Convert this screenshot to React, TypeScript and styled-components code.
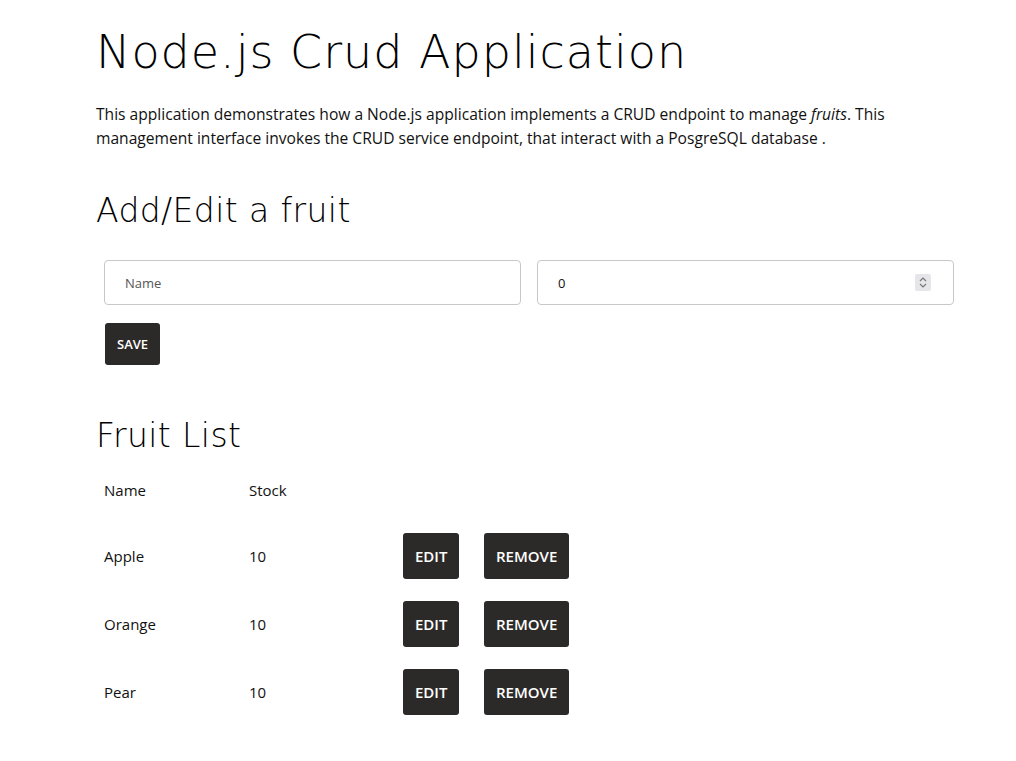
import React from "react";
import styled, { createGlobalStyle } from "styled-components";

const Global = createGlobalStyle`
  html, body { margin: 0; padding: 0; background: #fff; }
  body { font-family: "Open Sans", "Liberation Sans", sans-serif; color: #111; }
  input::-webkit-outer-spin-button, input::-webkit-inner-spin-button { -webkit-appearance: none; margin: 0; }
`;

const Page = styled.div`
  width: 866px;
  margin: 0 0 0 96px;
  padding: 0 0 40px 0;
  box-sizing: border-box;
`;

const Title = styled.h1`
  font-family: "DejaVu Sans", "Lato", sans-serif;
  font-weight: 200;
  font-size: 46px;
  line-height: 60px;
  letter-spacing: 1px;
  margin: 22px 0 0 0;
  color: #000;
`;

const Intro = styled.p`
  font-size: 15.6px;
  line-height: 24px;
  margin: 20px 0 0 0;
  max-width: 850px;
  color: #111;
`;

const Heading = styled.h2<{ $top: number }>`
  font-family: "DejaVu Sans", "Lato", sans-serif;
  font-weight: 200;
  font-size: 33px;
  line-height: 44px;
  letter-spacing: 0.4px;
  margin: ${(p) => p.$top}px 0 0 0;
  color: #000;
`;

const FormGrid = styled.div`
  display: grid;
  grid-template-columns: 1fr 1fr;
  margin-top: 27px;
`;

const Field = styled.div`
  padding: 0 8px;
  position: relative;
`;

const TextInput = styled.input`
  width: 100%;
  box-sizing: border-box;
  height: 45px;
  border: 1px solid #c8c8c8;
  border-radius: 4px;
  padding: 0 20px;
  font-family: "Open Sans", sans-serif;
  font-size: 13px;
  color: #111;
  outline: none;
  &::placeholder { color: #555; }
`;

const Spinner = styled.div`
  position: absolute;
  right: 31px;
  top: 14px;
  width: 16px;
  height: 17px;
  background: #e6e6ea;
  border-radius: 2px;
  display: flex;
  align-items: center;
  justify-content: center;
`;

const FormActions = styled.div`
  padding: 18px 8px 0 9px;
`;

const DarkButton = styled.button<{ $small?: boolean }>`
  background: #2c2a29;
  color: #fff;
  border: none;
  border-radius: 3px;
  font-family: "Open Sans", sans-serif;
  font-size: ${(p) => (p.$small ? "13px" : "15px")};
  font-weight: 600;
  height: ${(p) => (p.$small ? "42px" : "46px")};
  padding: 0 12px;
  cursor: pointer;
`;

const Table = styled.div`
  margin-top: 0;
  display: grid;
  grid-template-columns: 145px 154px 81px auto;
  align-items: center;
  justify-content: start;
  font-size: 15px;
`;

const Cell = styled.div<{ $h: number }>`
  padding: 0 8px;
  height: ${(p) => p.$h}px;
  display: flex;
  align-items: center;
`;

const fruits = [
  { name: "Apple", stock: 10 },
  { name: "Orange", stock: 10 },
  { name: "Pear", stock: 10 },
];

export default function App() {
  return (
    <>
      <Global />
      <Page>
        <Title>Node.js Crud Application</Title>
        <Intro>
          This application demonstrates how a Node.js application implements a CRUD endpoint to manage <em>fruits</em>. This
          management interface invokes the CRUD service endpoint, that interact with a PosgreSQL database .
        </Intro>
        <Heading $top={39}>Add/Edit a fruit</Heading>
        <FormGrid>
          <Field>
            <TextInput placeholder="Name" />
          </Field>
          <Field>
            <TextInput type="number" defaultValue={0} />
            <Spinner>
              <svg width="10" height="13" viewBox="0 0 10 13" fill="none" stroke="#777" strokeWidth="1.2">
                <path d="M2 5 L5 2 L8 5" />
                <path d="M2 8 L5 11 L8 8" />
              </svg>
            </Spinner>
          </Field>
        </FormGrid>
        <FormActions>
          <DarkButton $small>SAVE</DarkButton>
        </FormActions>
        <Heading $top={49}>Fruit List</Heading>
        <Table>
          <Cell $h={64}>Name</Cell>
          <Cell $h={64}>Stock</Cell>
          <Cell $h={64} />
          <Cell $h={64} />
          {fruits.map((f) => (
            <React.Fragment key={f.name}>
              <Cell $h={68}>{f.name}</Cell>
              <Cell $h={68}>{f.stock}</Cell>
              <Cell $h={68}>
                <DarkButton>EDIT</DarkButton>
              </Cell>
              <Cell $h={68}>
                <DarkButton>REMOVE</DarkButton>
              </Cell>
            </React.Fragment>
          ))}
        </Table>
      </Page>
    </>
  );
}
